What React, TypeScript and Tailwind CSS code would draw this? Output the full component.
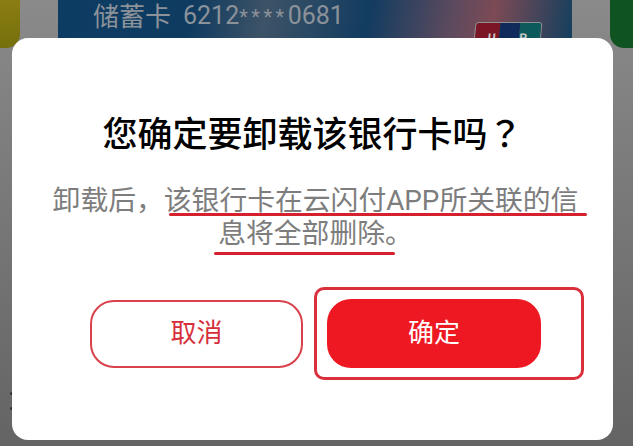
const cjk = "font-['Roboto','Noto_Sans_CJK_SC',sans-serif]";

export default function App() {
  return (
    <div className={`relative h-[446px] w-[633px] overflow-hidden bg-gradient-to-b from-[#8a8a8a] to-[#646464] ${cjk}`}>
      {/* dimmed page behind the dialog */}
      <div className="flex items-start justify-between">
        <div className="h-[48px] w-[20px] rounded-br-[14px] bg-gradient-to-b from-[#8a7d12] to-[#75700c]" />
        <div className="flex h-[46px] w-[514px] items-start justify-between overflow-hidden bg-[linear-gradient(100deg,#0d3c63_0%,#0f3b60_26%,#3d5367_40%,#123c60_60%,#5c4a5e_76%,#7c4a55_84%,#123f5e_100%)] pl-[35px] pr-[31px]">
          <div className="flex items-center gap-[12px] text-[26px] leading-[32px] text-[#8b9299]">
            <span>储蓄卡</span>
            <span className="text-[25px]">6212<span className="text-[20px] tracking-[3.5px]">****</span>0681</span>
          </div>
          <div className="mt-[22px] flex h-[30px] w-[67px] -skew-x-6 overflow-hidden rounded-[4px] border border-[#8f8f8f] text-[12px] font-bold leading-[22px] text-[#c9c9c9]">
            <div className="flex flex-1 justify-end bg-[#7a1626] pr-[3px]"><span className="mt-[4px]">U</span></div>
            <div className="flex-1 bg-[#102a5c]" />
            <div className="flex flex-1 bg-[#0d5a5c]"><span className="mt-[4px]">P</span></div>
          </div>
        </div>
        <div className="h-[48px] w-[23px] rounded-bl-[14px] bg-[#0f5420]" />
      </div>

      {/* bits of page text peeking out at the dialog's left edge */}
      <span className="absolute left-[10px] top-[392px] size-[3px] rounded-full bg-[#2f2f2f]" />
      <span className="absolute left-[10px] top-[407px] size-[3px] rounded-full bg-[#2f2f2f]" />

      {/* dialog */}
      <div className="absolute left-[12px] top-[38px] flex h-[402px] w-[601px] flex-col items-center rounded-[16px] bg-white">
        <h1 className="mt-[72px] text-[35px] font-medium leading-[44px] text-black">
          您确定要卸载该银行卡吗<span className="font-['Noto_Sans_CJK_JP',sans-serif]">？</span>
        </h1>
        <div className="mt-[26px] w-[560px] pl-[6px] text-center text-[27.8px] leading-[33px] text-[#7d7d7d]">
          <p className="relative">
            卸载后，该银行卡在云闪付APP所关联的信
            <span className="absolute left-[130px] top-[29px] h-[3px] w-[418px] rounded-full bg-[#d5202e]" />
          </p>
          <p className="relative">
            息将全部删除。
            <span className="absolute left-[175px] top-[35px] h-[3px] w-[181px] rounded-full bg-[#d5202e]" />
          </p>
        </div>
        <div className="mt-[37px] flex w-full items-center pl-[78px]">
          <button className="h-[68px] w-[213px] rounded-[24px] border-2 border-[#d9414c] bg-white text-[26px] text-[#d62f3b]">取消</button>
          <div className="ml-[11px] rounded-[10px] border-[3px] border-[#d9303c] py-[9px] pl-[10px] pr-[40px]">
            <button className="block h-[69px] w-[214px] rounded-[24px] bg-[#ee1822] text-[26px] text-white">确定</button>
          </div>
        </div>
      </div>
    </div>
  );
}
